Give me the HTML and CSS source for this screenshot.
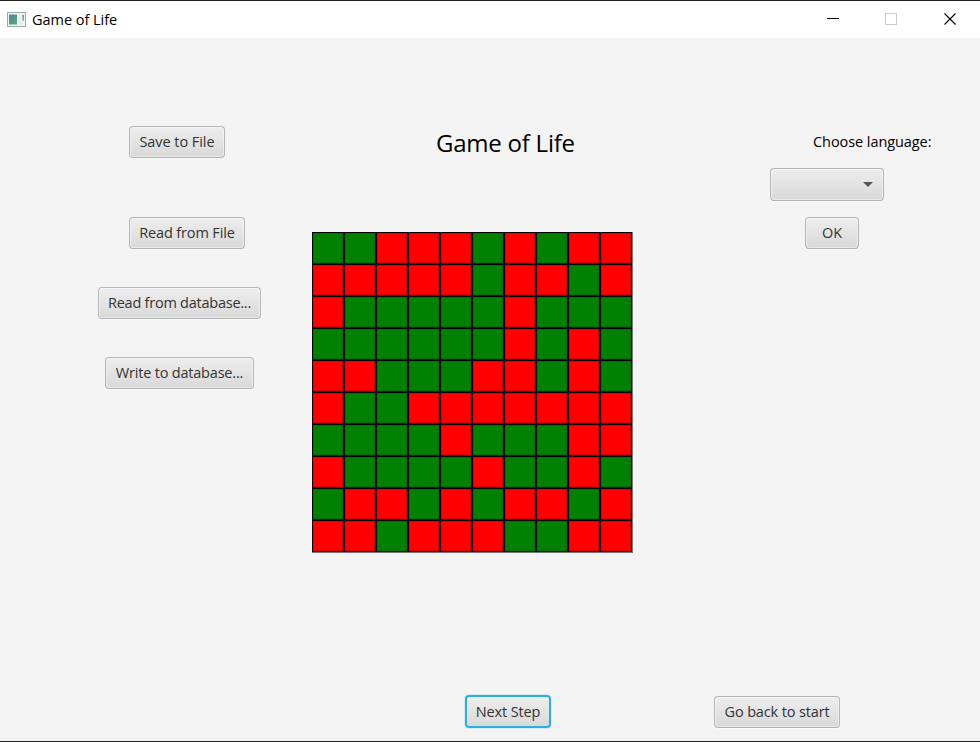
FILE: index.html
```html
<!DOCTYPE html>
<html lang="en">
<head>
<meta charset="utf-8">
<title>Game of Life</title>
<link rel="stylesheet" href="styles.css">
</head>
<body>
<div class="window">
  <header class="titlebar">
    <svg class="app-icon" width="20" height="16" viewBox="0 0 20 16">
      <defs>
        <linearGradient id="pane" x1="0" y1="0" x2="1" y2="1"><stop offset="0" stop-color="#4b83ab"/><stop offset="1" stop-color="#58ad70"/></linearGradient>
        <linearGradient id="strip" x1="0" y1="0" x2="0" y2="1"><stop offset="0" stop-color="#4b83ab"/><stop offset="1" stop-color="#8fc79f"/></linearGradient>
      </defs>
      <rect x=".5" y=".5" width="18" height="14" fill="#f4f4f4" stroke="#a2a7aa"/>
      <rect x="2" y="2.5" width="8" height="10" fill="url(#pane)"/>
      <rect x="11" y="2" width="5" height="11" fill="#e9edf0"/>
      <rect x="15.500" y="3" width="1.500" height="6" fill="url(#strip)"/>
    </svg>
    <span class="caption">Game of Life</span>
    <svg class="controls" width="131" height="14" viewBox="0 0 131 14">
      <path d="M0 6.5h12" stroke="#000"/>
      <rect x="58.5" y="1.500" width="11" height="11" fill="none" stroke="#ccc"/>
      <path d="M117.500 1.500l11 11m0-11l-11 11" stroke="#000" stroke-width="1.1"/>
    </svg>
  </header>
  <main class="content">
    <section class="left">
      <button class="btn save"><span>Save to File</span></button>
      <button class="btn read"><span>Read from File</span></button>
      <button class="btn read-db"><span>Read from database...</span></button>
      <button class="btn write-db"><span>Write to database...</span></button>
    </section>
    <section class="center">
      <h1 class="heading"><span>Game of Life</span></h1>
      <div class="board" id="board"></div>
    </section>
    <section class="right">
      <label class="language"><span>Choose language:</span></label>
      <button class="btn combo" aria-label="Language"><i class="arrow"></i></button>
      <button class="btn ok"><span>OK</span></button>
    </section>
  </main>
  <footer class="actions">
    <button class="btn next"><span>Next Step</span></button>
    <button class="btn back"><span>Go back to start</span></button>
  </footer>
</div>
<script src="board.js"></script>
</body>
</html>
```
FILE: styles.css
```css
* { box-sizing: border-box; }
body { margin: 0; font: 14.5px "Open Sans", "Noto Sans", sans-serif; color: #000; }
.window { width: 980px; height: 742px; display: flex; flex-direction: column; background: #f4f4f4; border-top: 1px solid #222; border-bottom: 1px solid #222; overflow: hidden; }
.titlebar { height: 37px; flex: none; display: flex; align-items: center; background: #fff; padding: 0 22px 0 7px; }
.app-icon { margin-right: 5px; }
.caption { font-size: 14.5px; letter-spacing: -.03px; }
.controls { margin: 0 0 2px auto; }
.content { height: 657px; flex: none; display: grid; grid-template-columns: 312px 321px 347px; }
.left, .center, .right { display: flex; flex-direction: column; align-items: flex-start; }
.left { padding-top: 88px; }
.right { padding-top: 87px; }
.btn { height: 32px; padding: 0 0 1px; display: flex; align-items: center; justify-content: center; font: inherit; letter-spacing: -.14px; color: #333; white-space: nowrap; border: 1px solid #b5b5b5; border-bottom-color: #b0b0b0; border-radius: 4px; background: linear-gradient(#eee, #d9d9d9); box-shadow: inset 0 0 0 1px rgba(255,255,255,.45), 0 1px 0 #fafafa; }
.save { width: 96px; margin-left: 129px; letter-spacing: -.05px; }
.read { width: 116px; margin: 59px 0 0 129px; }
.read-db { width: 163px; margin: 38px 0 0 98px; letter-spacing: -.24px; }
.write-db { width: 149px; margin: 38px 0 0 105px; letter-spacing: -.2px; }
.heading { height: 36px; margin: 87px 0 0 124px; font-size: 24px; line-height: 36px; font-weight: 400; white-space: nowrap; letter-spacing: -.23px; }
.board { width: 321px; height: 321px; margin-top: 71px; display: grid; grid-template: repeat(10, 32px) / repeat(10, 32px); border: solid #777; border-width: 0 1px 1px 0; }
.cell { border: 1px solid #000; border-right-color: rgba(0,0,0,.75); border-bottom-color: rgba(0,0,0,.75); box-shadow: inset 0 0 0 1px rgba(0,0,0,.1); }
.alive { background: #008000; }
.dead { background: #f00; }
.language { height: 33px; line-height: 33px; margin-left: 180px; white-space: nowrap; letter-spacing: -.07px; }
.combo { width: 114px; height: 33px; margin: 10px 0 0 137px; justify-content: flex-end; padding-right: 10px; }
.arrow { border: solid transparent; border-width: 5px 5px 0; border-top-color: #555; }
.ok { width: 54px; margin: 16px 0 0 172px; }
.actions { display: flex; }
.next { width: 86px; height: 33px; margin-left: 465px; padding: 0; border: 2px solid #2faed9; box-shadow: 0 0 0 1px #d5ecf5; }
.back { width: 126px; margin: 1px 0 0 163px; }
```
FILE: board.js
```js
const rows = [
  "1100010100", "0000010010", "0111110111", "1111110101", "0011100101",
  "0110000000", "1111011100", "0111101101", "1001010010", "0010001100"
];
const board = document.getElementById("board");
for (const row of rows) {
  for (const value of row) {
    const cell = document.createElement("div");
    cell.className = value === "1" ? "cell alive" : "cell dead";
    board.append(cell);
  }
}
```
